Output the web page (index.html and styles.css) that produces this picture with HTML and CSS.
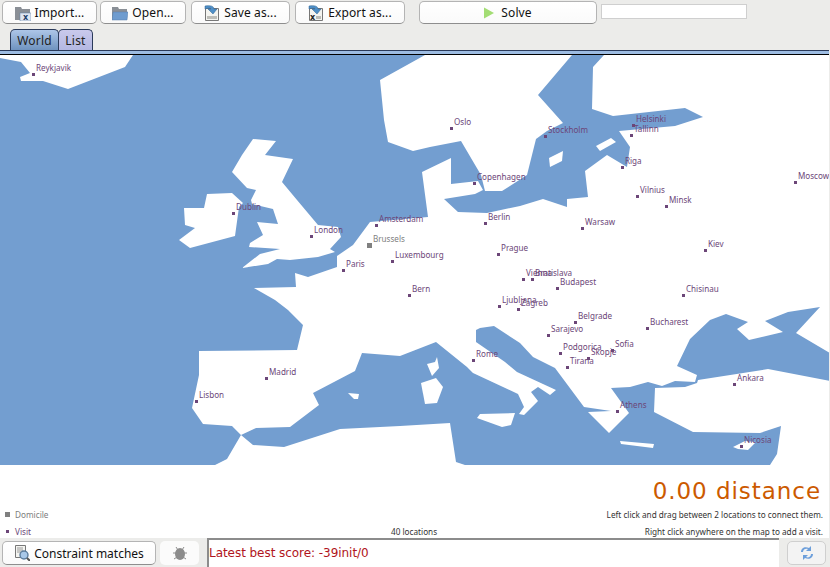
FILE: index.html
```html
<!DOCTYPE html>
<html lang="en">
<head>
<meta charset="utf-8">
<title>Vehicle Routing</title>
<link rel="stylesheet" href="styles.css">
</head>
<body>
<div class="app">
  <header class="toolbar">
    <button class="btn w-import"><svg class="ico" viewBox="0 0 16 16"><path class="folder-back" d="M0 2h6l1 2h8v11H0z"/><rect class="sheet" x="5" y="8" width="11" height="8"/><text class="ico-x" x="8" y="15">x</text></svg>Import...</button>
    <button class="btn w-open"><svg class="ico" viewBox="0 0 16 16"><path class="folder-back" d="M0 2h6l1 2h8v11H0z"/><path class="folder-front" d="M1 7h15l-1 8H0z"/></svg>Open...</button>
    <button class="btn w-save"><svg class="ico" viewBox="0 0 16 16"><path class="doc" d="M1.500 3.500h13v12h-13z"/><path class="doc-strip" d="M3 11h10v3H3z"/><path class="arrow" d="M1 1c5-1 9 0 9 3h3l-4 5-5-5h3C7 3 4 3 1 4z"/></svg>Save as...</button>
    <button class="btn w-export"><svg class="ico" viewBox="0 0 16 16"><path class="doc" d="M1.500 3.500h13v12h-13z"/><path class="doc-strip" d="M8 11h5v3H8z"/><text class="ico-x ico-x-dark" x="2" y="14.500">x</text><path class="arrow" d="M1 1c5-1 9 0 9 3h3l-4 5-5-5h3C7 3 4 3 1 4z"/></svg>Export as...</button>
    <button class="btn w-solve"><svg class="ico-play" viewBox="0 0 11 12"><path d="M0 0l11 6-11 6z"/></svg>Solve</button>
    <div class="progress"></div>
  </header>

  <nav class="tabs">
    <div class="tab tab-on">World</div>
    <div class="tab tab-off">List</div>
  </nav>
  <div class="tab-rule"></div>

  <main class="canvas">
    <svg class="map" viewBox="0 55 829 410" width="829" height="410">
      <rect class="sea" x="0" y="55" width="829" height="410"/>
      <g class="land">
        <polygon points="0,55 133,55 125,67 68,89 43,81 21,81 20,77 30,73 21,62 0,58"/>
        <polygon points="207,194 232,193 243,203 239,207 235,236 190,248 179,240 195,228 185,225 184,208 204,208"/>
        <polygon points="253,139 276,141 265,155 293,159 282,182 297,200 318,225 338,227 341,237 330,249 335,252 318,257 290,260 277,259 268,264 242,268 260,254 280,249 249,247 250,243 263,235 257,222 278,224 273,209 252,204 251,200 256,190 247,188 232,172 242,155"/>
        <polygon points="425,55 380,80 384,120 388,142 413,151 430,147 461,141 481,175 485,191 502,191 527,175 536,139 547,131 563,123 538,95 572,55"/>
        <polygon points="604,55 593,67 592,109 613,116 685,108 703,117 675,126 619,131 630,147 627,167 607,155 585,171 588,197 567,199 567,207 543,199 520,206 487,213 458,212 444,199 475,194 483,190 478,181 451,184 451,158 422,172 428,217 370,222 353,245 337,256 337,267 308,277 295,273 296,287 254,288 275,300 288,310 303,325 297,350 199,351 199,375 192,408 203,424 232,426 241,435 256,428 290,427 319,405 313,393 355,371 362,353 400,356 436,342 467,367 473,373 518,394 524,407 519,414 524,415 538,401 531,392 538,387 550,395 556,390 517,372 505,362 476,342 476,330 480,328 494,326 520,343 533,357 555,368 584,407 611,411 588,412 609,433 629,413 611,388 630,387 648,382 662,386 675,381 695,382 697,375 677,366 690,339 710,320 726,314 748,322 737,329 749,340 783,332 765,321 788,312 820,307 796,333 830,353 830,55"/>
        <polygon points="215,465 227,459 241,435 253,445 284,447 340,429 400,426 450,423 456,462 465,465"/>
        <polygon points="770,465 777,454 781,426 760,433 693,432 654,412 655,388 685,387 697,383 698,380 768,369 830,381 830,465"/>
        <polygon points="427,364 435,362 437,357 439,368 432,376"/>
        <polygon points="421,383 436,378 443,387 437,403 425,404"/>
        <polygon points="477,418 480,414 515,413 511,425 502,427"/>
        <polygon points="620,441 654,444 653,448 621,444"/>
        <polygon points="733,447 745,441 756,442 748,450 738,449"/>
        <polygon points="348,393 359,394 358,399 354,399"/>
        <polygon points="549,158 563,151 562,161 550,167"/>
        <polygon points="596,146 611,138 616,142 600,151"/>
      </g>
      <g class="cities">
        <rect x="32" y="73" width="3" height="3"/><text x="36" y="71">Reykjavik</text>
        <rect x="450" y="127" width="3" height="3"/><text x="454" y="125">Oslo</text>
        <rect x="544" y="135" width="3" height="3"/><text x="548" y="133">Stockholm</text>
        <rect x="632" y="124" width="3" height="3"/><text x="636" y="122">Helsinki</text>
        <rect x="630" y="134" width="3" height="3"/><text x="634" y="132">Tallinn</text>
        <rect x="621" y="166" width="3" height="3"/><text x="625" y="164">Riga</text>
        <rect x="473" y="182" width="3" height="3"/><text x="477" y="180">Copenhagen</text>
        <rect x="636" y="195" width="3" height="3"/><text x="640" y="193">Vilnius</text>
        <rect x="665" y="205" width="3" height="3"/><text x="669" y="203">Minsk</text>
        <rect x="794" y="181" width="3" height="3"/><text x="798" y="179">Moscow</text>
        <rect x="484" y="222" width="3" height="3"/><text x="488" y="220">Berlin</text>
        <rect x="581" y="227" width="3" height="3"/><text x="585" y="225">Warsaw</text>
        <rect x="232" y="212" width="3" height="3"/><text x="236" y="210">Dublin</text>
        <rect x="310" y="235" width="3" height="3"/><text x="314" y="233">London</text>
        <rect x="375" y="224" width="3" height="3"/><text x="379" y="222">Amsterdam</text>
        <rect class="home" x="367" y="243" width="5" height="5"/><text class="home-label" x="373" y="242">Brussels</text>
        <rect x="391" y="260" width="3" height="3"/><text x="395" y="258">Luxembourg</text>
        <rect x="342" y="269" width="3" height="3"/><text x="346" y="267">Paris</text>
        <rect x="497" y="253" width="3" height="3"/><text x="501" y="251">Prague</text>
        <rect x="408" y="294" width="3" height="3"/><text x="412" y="292">Bern</text>
        <rect x="704" y="249" width="3" height="3"/><text x="708" y="247">Kiev</text>
        <rect x="682" y="294" width="3" height="3"/><text x="686" y="292">Chisinau</text>
        <rect x="646" y="327" width="3" height="3"/><text x="650" y="325">Bucharest</text>
        <rect x="522" y="278" width="3" height="3"/><text x="526" y="276">Vienna</text>
        <rect x="531" y="278" width="3" height="3"/><text x="535" y="276">Bratislava</text>
        <rect x="556" y="287" width="3" height="3"/><text x="560" y="285">Budapest</text>
        <rect x="498" y="305" width="3" height="3"/><text x="502" y="303">Ljubljana</text>
        <rect x="517" y="308" width="3" height="3"/><text x="521" y="306">Zagreb</text>
        <rect x="574" y="321" width="3" height="3"/><text x="578" y="319">Belgrade</text>
        <rect x="547" y="334" width="3" height="3"/><text x="551" y="332">Sarajevo</text>
        <rect x="559" y="352" width="3" height="3"/><text x="563" y="350">Podgorica</text>
        <rect x="587" y="357" width="3" height="3"/><text x="591" y="355">Skopje</text>
        <rect x="611" y="349" width="3" height="3"/><text x="615" y="347">Sofia</text>
        <rect x="566" y="366" width="3" height="3"/><text x="570" y="364">Tirana</text>
        <rect x="472" y="359" width="3" height="3"/><text x="476" y="357">Rome</text>
        <rect x="616" y="410" width="3" height="3"/><text x="620" y="408">Athens</text>
        <rect x="733" y="383" width="3" height="3"/><text x="737" y="381">Ankara</text>
        <rect x="740" y="445" width="3" height="3"/><text x="744" y="443">Nicosia</text>
        <rect x="265" y="377" width="3" height="3"/><text x="269" y="375">Madrid</text>
        <rect x="195" y="400" width="3" height="3"/><text x="199" y="398">Lisbon</text>
      </g>
    </svg>
    <section class="info">
      <div class="distance">0.00 distance</div>
      <div class="info-row info-row-home">
        <span class="legend legend-home"><i class="mark mark-home"></i>Domicile</span>
        <span class="hint">Left click and drag between 2 locations to connect them.</span>
      </div>
      <div class="info-row">
        <span class="legend legend-visit"><i class="mark mark-visit"></i>Visit</span>
        <span class="count">40 locations</span>
        <span class="hint">Right click anywhere on the map to add a visit.</span>
      </div>
    </section>
  </main>

  <footer class="statusbar">
    <button class="btn w-matches"><svg class="ico ico-search" viewBox="0 0 16 16"><path class="doc" d="M1.500 .5h10v12h-10z"/><path class="lines" d="M3 3h6M3 5h6M3 7h4"/><circle class="lens" cx="10" cy="10" r="4"/><path class="handle" d="M13 13l3 3"/></svg>Constraint matches</button>
    <button class="btn-flat w-bug"><svg class="ico-bug" viewBox="0 0 14 14"><ellipse cx="7" cy="8" rx="5" ry="6"/><path class="legs" d="M3 1l2 3M11 1L9 4M0 7h3M14 7h-3M1 13l3-2M13 13l-3-2"/></svg></button>
    <div class="score">Latest best score: -39init/0</div>
    <button class="btn-flat w-refresh"><svg class="ico-refresh" viewBox="0 0 14 14"><path d="M1 6C1 2 5 0 9 2l2-2v5H6l2-2C6 2 3 3 3 6zM13 8c0 4-4 6-8 4l-2 2V9h5l-2 2c2 1 5 0 5-3z"/></svg></button>
  </footer>
</div>
</body>
</html>
```
FILE: styles.css
```css
* { box-sizing: border-box; }
html, body { margin: 0; padding: 0; }
body {
  width: 830px;
  height: 567px;
  overflow: hidden;
  background: #ececea;
  font-family: "Noto Sans", sans-serif;
  color: #111;
}
.app { display: flex; flex-direction: column; height: 567px; }

.toolbar {
  display: flex;
  align-items: flex-start;
  height: 29px;
  padding: 1px 0 0 2px;
}
.btn {
  display: flex;
  align-items: center;
  justify-content: center;
  gap: 4px;
  height: 23px;
  padding: 0;
  background: linear-gradient(#fff, #fafafa);
  border: 1px solid #b4b4b4;
  border-bottom-color: #8e8e8e;
  border-radius: 5px;
  font: 12px "Noto Sans", sans-serif;
  letter-spacing: .1px;
  color: #111;
  white-space: nowrap;
}
.w-import { width: 95px; margin-right: 3px; }
.w-open { width: 86px; margin-right: 5px; }
.w-save { width: 99px; margin-right: 5px; }
.w-export { width: 110px; margin-right: 14px; }
.w-solve { width: 178px; margin-right: 4px; gap: 7px; }
.progress {
  width: 146px;
  height: 15px;
  margin-top: 3px;
  background: #fff;
  border: 1px solid #cfcfcf;
}

.ico { width: 16px; height: 16px; flex: none; }
.folder-back { fill: #8a8f96; }
.folder-front { fill: #6f9ccf; stroke: #5a7fa8; stroke-width: .5; }
.sheet { fill: #dfe6f0; stroke: #5d7fa8; stroke-width: .5; }
.ico-x { font: bold 8px "DejaVu Sans", sans-serif; fill: #1d3f6a; }
.ico-x-dark { fill: #222; }
.doc { fill: #f4f4f0; stroke: #777; stroke-width: 1; }
.doc-strip { fill: #bdbdb8; }
.arrow { fill: #4f8fc7; stroke: #2f6390; stroke-width: .5; }
.ico-play { width: 10px; height: 12px; fill: #a3dd74; flex: none; }
.lines { stroke: #9a9a9a; stroke-width: 1; fill: none; }
.lens { fill: #a9c8e8; stroke: #5c7c9c; stroke-width: 1.4; }
.handle { stroke: #555; stroke-width: 2; }

.tabs { display: flex; height: 21px; padding-left: 10px; }
.tab {
  display: flex;
  align-items: center;
  justify-content: center;
  font-size: 12px;
  letter-spacing: .2px;
  color: #222;
  border: 1px solid #2a3a5a;
  border-bottom: 0;
  border-radius: 5px 5px 0 0;
}
.tab-on { width: 49px; background: linear-gradient(#adc6e8, #6f93bf); }
.tab-off { width: 35px; margin-left: -1px; background: linear-gradient(#c9c9ec, #b4b8e2); }
.tab-rule {
  width: 829px;
  height: 5px;
  background: #9dbce2;
  border-top: 1px solid #2a3a5a;
  border-bottom: 1px solid #000;
}

.canvas { display: flex; flex-direction: column; width: 829px; height: 483px; background: #fff; }
.map { display: block; flex: none; }
.sea { fill: #739ed0; }
.land polygon { fill: #fff; }
.cities rect { fill: #6c4678; }
.cities text {
  font: 8.1px "Noto Sans", sans-serif;
  fill: #6c4678;
}
.cities .home { fill: #808080; }
.cities .home-label { fill: #808080; }

.info { display: flex; flex-direction: column; flex: 1; padding: 14px 6px 0 5px; }
.distance {
  text-align: right;
  font-family: "DejaVu Sans", sans-serif;
  font-size: 23px;
  line-height: 24px;
  letter-spacing: .95px;
  color: #cc5a00;
  margin-right: 2px;
}
.info-row {
  display: flex;
  align-items: center;
  justify-content: space-between;
  height: 11px;
  font-size: 8.2px;
  color: #333;
  position: relative;
}
.info-row-home { margin-top: 6px; margin-bottom: 6px; }
.legend { display: flex; align-items: center; gap: 5px; }
.legend-home { color: #7d7d7d; }
.legend-visit { color: #6c4678; }
.mark { display: block; }
.mark-home { width: 5px; height: 5px; background: #808080; }
.mark-visit { width: 3px; height: 3px; margin: 0 1px 0 1px; background: #6c4678; }
.count { position: absolute; left: 386px; }

.statusbar {
  display: flex;
  align-items: stretch;
  height: 29px;
  padding: 3px 4px 2px 2px;
}
.w-matches { width: 154px; height: 24px; margin-right: 4px; gap: 4px; letter-spacing: 0; }
.btn-flat {
  display: flex;
  align-items: center;
  justify-content: center;
  height: 24px;
  padding: 0;
  border: 1px solid transparent;
  border-radius: 5px;
  background: #fbfbfb;
}
.w-bug { width: 39px; margin-right: 8px; }
.ico-bug { width: 14px; height: 14px; fill: #8c8c8c; }
.legs { stroke: #8c8c8c; stroke-width: 1; fill: none; }
.score {
  flex: none;
  width: 572px;
  height: 29px;
  margin-top: -3px;
  padding: 4px 0 0 0;
  background: #fff;
  border-top: 2px solid #8c8c8c;
  border-left: 2px solid #8c8c8c;
  font-family: "DejaVu Sans", sans-serif;
  color: #b01420;
  font-size: 12px;
  line-height: 18px;
  letter-spacing: -.05px;
}
.w-refresh { width: 39px; margin-left: 8px; border-color: #cfcfcf; background: #f3f3f3; }
.ico-refresh { width: 14px; height: 14px; fill: #6d9fdb; }
```
